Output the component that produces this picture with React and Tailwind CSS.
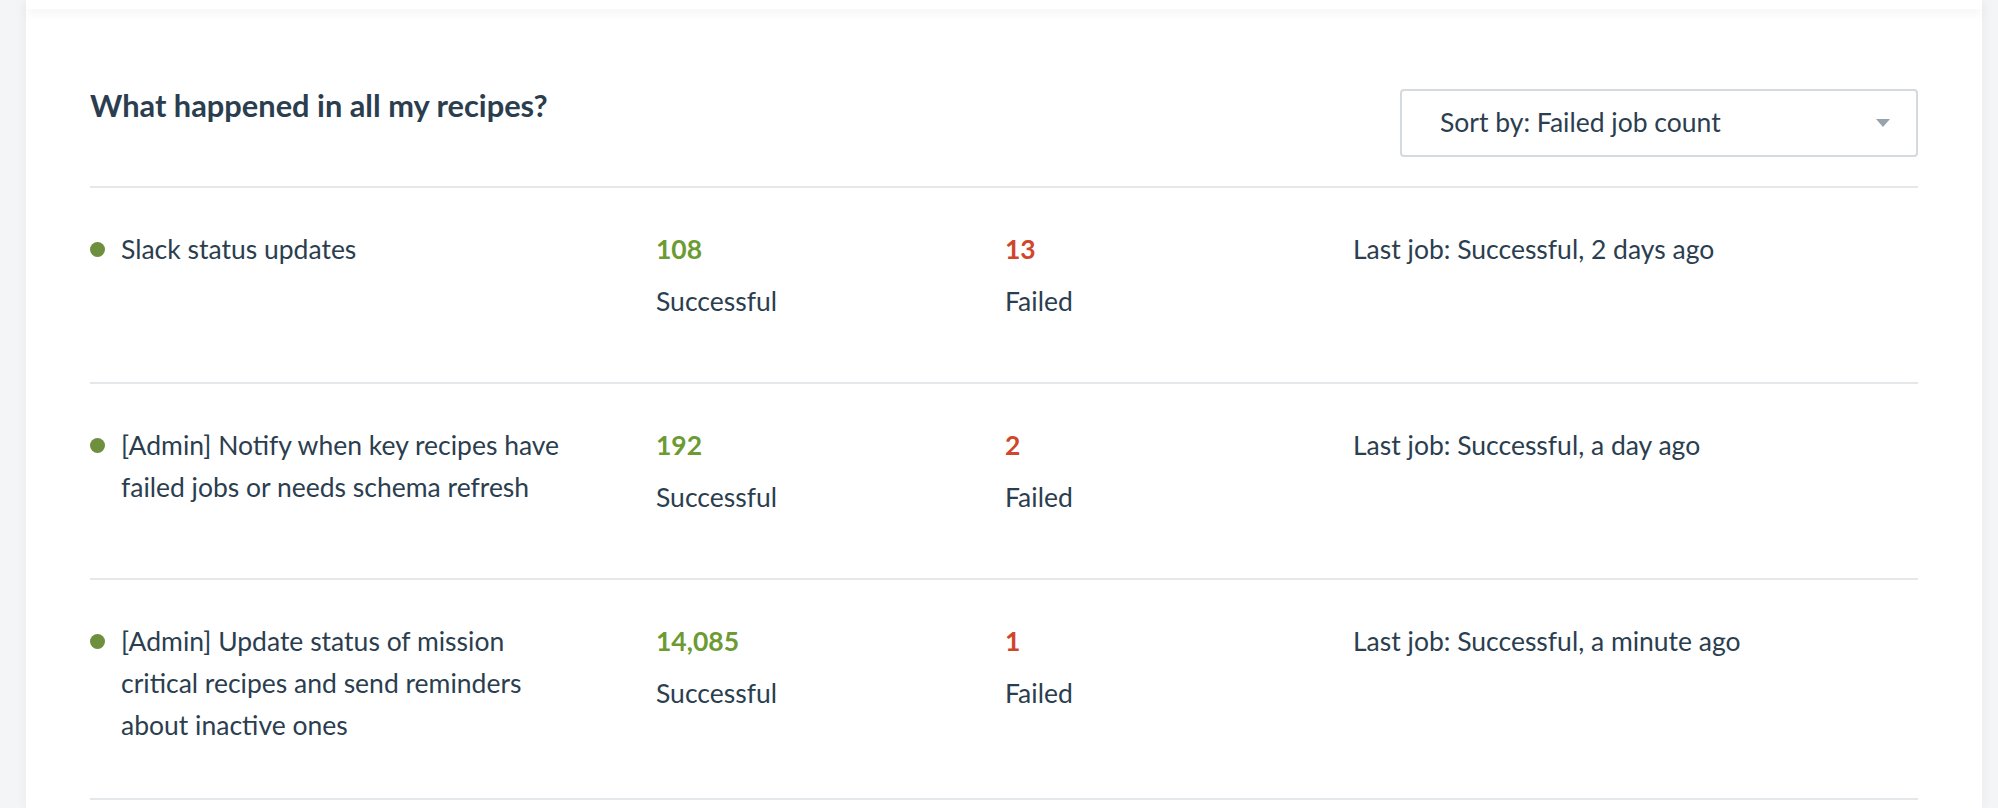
const recipes = [
  {
    name: "Slack status updates",
    success: "108",
    failed: "13",
    last: "Last job: Successful, 2 days ago",
  },
  {
    name: "[Admin] Notify when key recipes have failed jobs or needs schema refresh",
    success: "192",
    failed: "2",
    last: "Last job: Successful, a day ago",
  },
  {
    name: "[Admin] Update status of mission critical recipes and send reminders about inactive ones",
    success: "14,085",
    failed: "1",
    last: "Last job: Successful, a minute ago",
  },
];

function RecipeRow({ recipe }) {
  return (
    <div className="grid grid-cols-[566px_349px_348px_1fr] border-b-2 border-[#e5e8eb] pt-[40px] pb-[52px] text-[26.5px] leading-[42px] text-[#2b3e4f]">
      {/* Name */}
      <div className="flex items-start gap-4">
        <span className="mt-[14px] h-[15px] w-[15px] shrink-0 rounded-full bg-[#6e8f3d]" />
        <span className="w-[452px]">{recipe.name}</span>
      </div>

      {/* Successful */}
      <div className="mb-2">
        <div className="font-bold text-[#6c9a33]">{recipe.success}</div>
        <div className="mt-[10px]">Successful</div>
      </div>

      {/* Failed */}
      <div>
        <div className="font-bold text-[#d0462a]">{recipe.failed}</div>
        <div className="mt-[10px]">Failed</div>
      </div>

      {/* Last job */}
      <div>{recipe.last}</div>
    </div>
  );
}

export default function App() {
  return (
    <div
      className="min-h-screen bg-[#f4f5f7] pl-[26px] pr-[16px] antialiased"
      style={{ fontFamily: "Lato, 'Open Sans', sans-serif" }}
    >
      <div className="min-h-[808px] bg-white shadow-[0_0_12px_rgba(40,50,60,0.06)]">
        {/* Top card edge */}
        <div className="relative z-10 h-[9px] bg-white shadow-[0_5px_10px_rgba(0,0,0,0.04)]" />

        <div className="px-[64px] pt-[80px]">
          {/* Header */}
          <div className="flex items-start justify-between border-b-2 border-[#e5e8eb] pb-[29px]">
            <h2 className="text-[30.8px] font-bold leading-[34px] text-[#2b3e4f]">
              What happened in all my recipes?
            </h2>
            <button className="flex h-[68px] w-[518px] items-center justify-between rounded-[4px] border-2 border-[#d5dade] bg-white pl-[38px] pr-[26px] text-[26.5px] text-[#2b3e4f]">
              <span>Sort by: Failed job count</span>
              <svg width="14" height="8" viewBox="0 0 14 8">
                <path d="M0 0h14L7 8z" fill="#97a3ad" />
              </svg>
            </button>
          </div>

          {recipes.map((r) => (
            <RecipeRow key={r.name} recipe={r} />
          ))}
        </div>
      </div>
    </div>
  );
}
